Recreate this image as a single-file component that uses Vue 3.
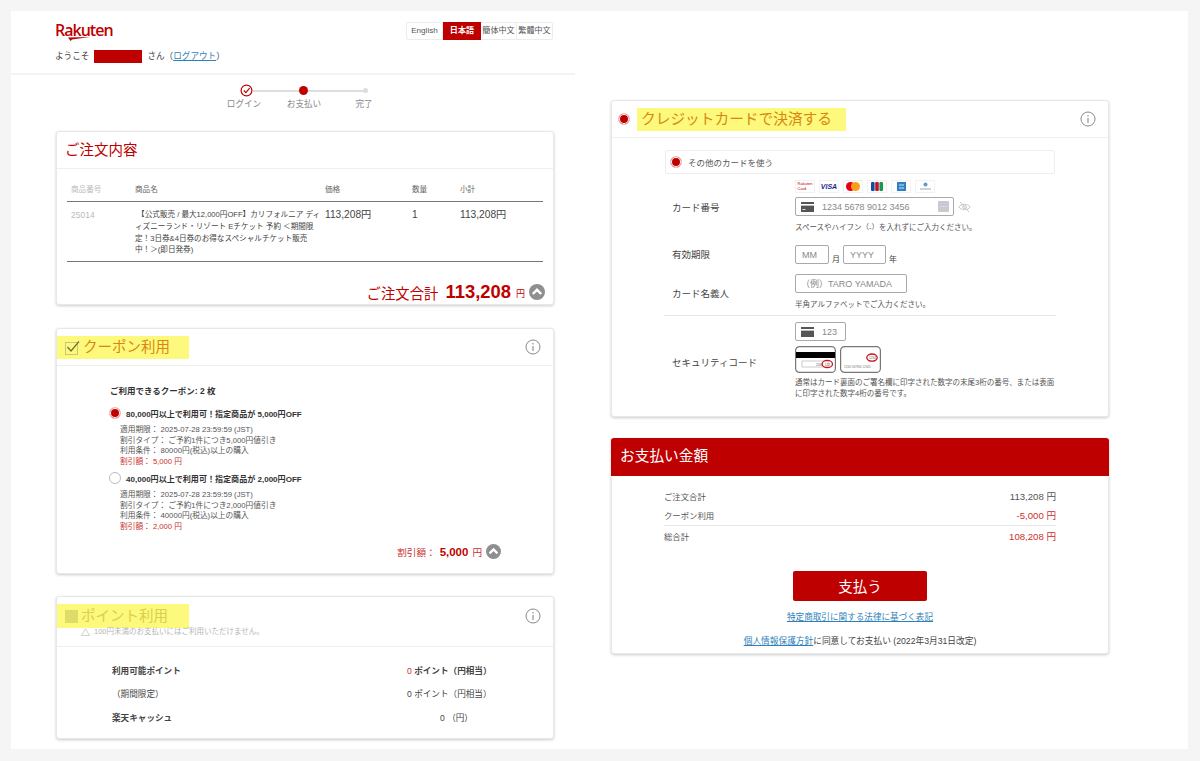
<script setup>
const languages = [
  { label: 'English' },
  { label: '日本語', active: true },
  { label: '簡体中文' },
  { label: '繁體中文' },
]

const columns = ['商品番号', '商品名', '価格', '数量', '小計']

const coupons = [
  {
    title: '80,000円以上で利用可！指定商品が 5,000円OFF',
    selected: true,
    expires: '2025-07-28 23:59:59 (JST)',
    type: 'ご予約1件につき5,000円値引き',
    condition: '80000円(税込)以上の購入',
    discount: '5,000 円',
  },
  {
    title: '40,000円以上で利用可！指定商品が 2,000円OFF',
    selected: false,
    expires: '2025-07-28 23:59:59 (JST)',
    type: 'ご予約1件につき2,000円値引き',
    condition: '40000円(税込)以上の購入',
    discount: '2,000 円',
  },
]
</script>

<template>
  <div class="page">
    <div class="canvas">
      <div class="left">
        <header class="top">
          <div class="top-row">
            <div class="logo">
              <span class="logo-text">Rakuten</span>
              <svg class="logo-swoosh" width="22" height="4" viewBox="0 0 22 4">
                <path d="M0 0.4 L22 0 L4 2.6 L2.5 4 Z" fill="#bf0000" />
              </svg>
            </div>
            <div class="langs">
              <span v-for="l in languages" :key="l.label" class="lang" :class="{ active: l.active }">{{ l.label }}</span>
            </div>
          </div>
          <div class="welcome">
            <span>ようこそ</span>
            <span class="name-mask"></span>
            <span>さん（<a class="link">ログアウト</a>）</span>
          </div>
        </header>

        <div class="steps">
          <div class="step-track">
            <svg width="13" height="13" viewBox="0 0 13 13">
              <circle cx="6.5" cy="6.5" r="5.4" fill="#fff" stroke="#bf0000" stroke-width="1.2" />
              <path d="M3.8 6.5 L5.9 8.6 L9.6 4.2" fill="none" stroke="#bf0000" stroke-width="1.2" />
            </svg>
            <span class="step-line"></span>
            <span class="step-dot"></span>
            <span class="step-line second"></span>
            <span class="step-dot off"></span>
          </div>
          <div class="step-labels">
            <span>ログイン</span>
            <span>お支払い</span>
            <span>完了</span>
          </div>
        </div>

        <section class="card order">
          <div class="card-head">
            <h2 class="title">ご注文内容</h2>
          </div>
          <div class="order-body">
            <div class="table-row table-head">
              <span v-for="c in columns" :key="c">{{ c }}</span>
            </div>
            <div class="table-row table-item">
              <span class="muted">25014</span>
              <span class="product">&nbsp;【公式販売 / 最大12,000円OFF】カリフォルニア ディ<br />ィズニーランド・リゾート Eチケット 予約 ＜期間限<br />定！3日券&amp;4日券のお得なスペシャルチケット販売<br />中！＞(即日発券)</span>
              <span class="num">113,208円</span>
              <span class="num">1</span>
              <span class="num">113,208円</span>
            </div>
            <div class="order-total">
              <span class="total-label">ご注文合計</span>
              <b class="total-value">113,208</b>
              <span class="total-yen">円</span>
              <svg class="chevron" width="16" height="16" viewBox="0 0 16 16">
                <circle cx="8" cy="8" r="8" fill="#8f8f8f" />
                <path d="M3.8 10 L8 5.8 L12.2 10" fill="none" stroke="#fff" stroke-width="2.4" />
              </svg>
            </div>
          </div>
        </section>

        <section class="card coupon">
          <div class="card-head between">
            <div class="marker">
              <svg width="15" height="15" viewBox="0 0 15 15">
                <rect x="0.5" y="2.5" width="12" height="12" fill="none" stroke="#c9c77a" />
                <path d="M2.5 7 L6 11 L14 1.5" fill="none" stroke="#6d6d3a" stroke-width="1.2" />
              </svg>
              <h2 class="title hl">クーポン利用</h2>
            </div>
            <svg class="info" width="16" height="16" viewBox="0 0 16 16">
              <circle cx="8" cy="8" r="7" fill="none" stroke="#888" />
              <path d="M8 7 V12 M8 4 V5.4" stroke="#888" stroke-width="1.1" />
            </svg>
          </div>
          <div class="coupon-body">
            <p class="coupon-count">ご利用できるクーポン: 2 枚</p>
            <div v-for="c in coupons" :key="c.title" class="coupon-item">
              <div class="coupon-title">
                <span class="radio" :class="{ on: c.selected }"></span>
                <b>{{ c.title }}</b>
              </div>
              <div class="coupon-detail">
                <div>適用期限： {{ c.expires }}</div>
                <div>割引タイプ： {{ c.type }}</div>
                <div>利用条件： {{ c.condition }}</div>
                <div class="red-text">割引額： {{ c.discount }}</div>
              </div>
            </div>
            <div class="coupon-total">
              <span>割引額：</span>
              <b>5,000</b>
              <span>円</span>
              <svg width="15" height="15" viewBox="0 0 16 16">
                <circle cx="8" cy="8" r="8" fill="#8f8f8f" />
                <path d="M3.8 10 L8 5.8 L12.2 10" fill="none" stroke="#fff" stroke-width="2.4" />
              </svg>
            </div>
          </div>
        </section>

        <section class="card points">
          <div class="points-head">
            <div class="between">
              <div class="marker">
                <span class="disabled-box"></span>
                <h2 class="title hl pale">ポイント利用</h2>
              </div>
              <svg class="info" width="16" height="16" viewBox="0 0 16 16">
                <circle cx="8" cy="8" r="7" fill="none" stroke="#888" />
                <path d="M8 7 V12 M8 4 V5.4" stroke="#888" stroke-width="1.1" />
              </svg>
            </div>
            <div class="points-note">
              <svg width="9" height="8" viewBox="0 0 9 8">
                <path d="M4.5 0.7 L8.5 7.5 H0.5 Z" fill="none" stroke="#c4c4c4" stroke-width="0.8" />
              </svg>
              <span>100円未満のお支払いにはご利用いただけません。</span>
            </div>
          </div>
          <div class="points-body">
            <div class="point-row">
              <b>利用可能ポイント</b>
              <b class="point-value"><span class="red-text light">0</span> ポイント（円相当）</b>
            </div>
            <div class="point-row">
              <span>（期間限定）</span>
              <span class="point-value">0 ポイント（円相当）</span>
            </div>
            <div class="point-row">
              <b>楽天キャッシュ</b>
              <span class="point-value cash">0 （円）</span>
            </div>
          </div>
        </section>
      </div>

      <div class="right">
        <section class="card credit">
          <div class="card-head between">
            <div class="credit-title">
              <span class="radio on"></span>
              <div class="credit-hl">
                <h2 class="title hl">クレジットカードで決済する</h2>
              </div>
            </div>
            <svg class="info" width="16" height="16" viewBox="0 0 16 16">
              <circle cx="8" cy="8" r="7" fill="none" stroke="#888" />
              <path d="M8 7 V12 M8 4 V5.4" stroke="#888" stroke-width="1.1" />
            </svg>
          </div>
          <div class="credit-body">
            <div class="other-card">
              <span class="radio on"></span>
              <span>その他のカードを使う</span>
            </div>

            <div class="form-row card-row">
              <label>カード番号</label>
              <div>
                <div class="brands">
                  <span class="brand rakuten">Rakuten<br />Card</span>
                  <span class="brand visa">VISA</span>
                  <span class="brand">
                    <svg width="14" height="9" viewBox="0 0 14 9">
                      <circle cx="4.5" cy="4.5" r="4.5" fill="#e50012" />
                      <circle cx="9.5" cy="4.5" r="4.5" fill="#f79e1b" />
                    </svg>
                  </span>
                  <span class="brand">
                    <svg width="12" height="9" viewBox="0 0 12 9">
                      <rect width="3.6" height="9" rx="1" fill="#0b4ea2" />
                      <rect x="4.2" width="3.6" height="9" rx="1" fill="#c8102e" />
                      <rect x="8.4" width="3.6" height="9" rx="1" fill="#1a9b4b" />
                    </svg>
                  </span>
                  <span class="brand">
                    <svg width="9" height="9" viewBox="0 0 9 9">
                      <rect width="9" height="9" fill="#2f7fc4" />
                      <path d="M2 3 H7 M2 6 H7" stroke="#cfe3f5" />
                    </svg>
                  </span>
                  <span class="brand">
                    <svg width="13" height="9" viewBox="0 0 13 9">
                      <circle cx="6.5" cy="2.5" r="2" fill="#5d9bc9" />
                      <path d="M1 7 H12" stroke="#a8b8c4" stroke-width="1.2" />
                    </svg>
                  </span>
                </div>
                <div class="number-line">
                  <div class="input number">
                    <svg width="13" height="10" viewBox="0 0 13 10">
                      <rect width="13" height="10" fill="#555" />
                      <rect y="2" width="13" height="1.6" fill="#fff" />
                      <rect x="1.5" y="7" width="3" height="1" fill="#ddd" />
                    </svg>
                    <span class="ph">1234 5678 9012 3456</span>
                    <span class="dots">···</span>
                  </div>
                  <svg width="13" height="12" viewBox="0 0 13 12">
                    <path d="M0.8 6 C3 2.4 10 2.4 12.2 6 C10 9.6 3 9.6 0.8 6 Z" fill="none" stroke="#c8c8c8" />
                    <circle cx="6.5" cy="6" r="1.8" fill="none" stroke="#c8c8c8" />
                    <path d="M2 1 L11 11" stroke="#c8c8c8" />
                  </svg>
                </div>
                <p class="hint">スペースやハイフン（-）を入れずにご入力ください。</p>
              </div>
            </div>

            <div class="form-row expiry">
              <label>有効期限</label>
              <div class="expiry-fields">
                <div class="input mm"><span class="ph">MM</span></div>
                <span class="unit">月</span>
                <div class="input yy"><span class="ph">YYYY</span></div>
                <span class="unit">年</span>
              </div>
            </div>

            <div class="form-row holder">
              <label>カード名義人</label>
              <div>
                <div class="input name"><span class="ph">（例）TARO YAMADA</span></div>
                <p class="hint">半角アルファベットでご入力ください。</p>
              </div>
            </div>

            <div class="form-row security">
              <label>セキュリティコード</label>
              <div>
                <div class="input cvv">
                  <svg width="13" height="10" viewBox="0 0 13 10">
                    <rect width="13" height="10" fill="#555" />
                    <rect y="2" width="13" height="1.6" fill="#fff" />
                  </svg>
                  <span class="ph">123</span>
                </div>
                <div class="cvv-pics">
                  <svg width="41" height="27" viewBox="0 0 41 27">
                    <rect x="0.6" y="0.6" width="39.8" height="25.8" rx="4" fill="#fff" stroke="#777" stroke-width="1.2" />
                    <rect x="1" y="6" width="39" height="6" fill="#000" />
                    <rect x="7" y="15" width="26" height="6" fill="#fff" stroke="#999" stroke-width="0.5" />
                    <text x="21" y="19.5" font-size="3.2" fill="#666">2345</text>
                    <text x="29.8" y="19.5" font-size="3.2" fill="#666">123</text>
                    <ellipse cx="32.3" cy="18" rx="5.2" ry="3.6" fill="none" stroke="#d0121b" stroke-width="1.3" />
                  </svg>
                  <svg width="41" height="27" viewBox="0 0 41 27">
                    <rect x="0.6" y="0.6" width="39.8" height="25.8" rx="4" fill="#fff" stroke="#777" stroke-width="1.2" />
                    <text x="29" y="13" font-size="3.2" fill="#666">1234</text>
                    <ellipse cx="32" cy="11.6" rx="5.2" ry="3.6" fill="none" stroke="#d0121b" stroke-width="1.3" />
                    <text x="4" y="21.5" font-size="3" fill="#777">1234 567890 12345</text>
                  </svg>
                </div>
                <p class="hint security-hint">通常はカード裏面のご署名欄に印字された数字の末尾3桁の番号、または表面<br />に印字された数字4桁の番号です。</p>
              </div>
            </div>
          </div>
        </section>

        <section class="card payment">
          <div class="pay-head">お支払い金額</div>
          <div class="pay-body">
            <div class="pay-row">
              <span>ご注文合計</span>
              <span>113,208 円</span>
            </div>
            <div class="pay-row">
              <span>クーポン利用</span>
              <span class="red-text">-5,000 円</span>
            </div>
            <div class="pay-row sum">
              <span>総合計</span>
              <span class="red-text">108,208 円</span>
            </div>
            <button class="pay-button" type="button">支払う</button>
            <a class="link law">特定商取引に関する法律に基づく表記</a>
            <p class="agree"><a class="link">個人情報保護方針</a>に同意してお支払い (2022年3月31日改定)</p>
          </div>
        </section>
      </div>
    </div>
  </div>
</template>

<style>
html,
body {
  margin: 0;
  background: #f5f5f5;
}
</style>

<style scoped>
.page {
  width: 1200px;
  height: 761px;
  padding: 11px 12px 12px 11px;
  box-sizing: border-box;
  font-family: "Liberation Sans", "Noto Sans CJK JP", sans-serif;
  color: #333;
  overflow: hidden;
}

.canvas {
  display: flex;
  height: 738px;
  background: #fff;
}

.left {
  width: 564px;
}

.right {
  width: 498px;
  margin-left: 36px;
  padding-top: 89px;
}

h2,
p {
  margin: 0;
}

.top {
  height: 64px;
  padding: 11px 22px 0 44px;
  box-sizing: border-box;
  border-bottom: 2px solid #f3f3f3;
}

.top-row {
  display: flex;
  justify-content: space-between;
  height: 28px;
}

.logo {
  position: relative;
  width: 60px;
  height: 24px;
}

.logo-text {
  display: block;
  color: #bf0000;
  font-family: "Open Sans", sans-serif;
  font-size: 16px;
  font-weight: 600;
  letter-spacing: -1px;
  line-height: 16px;
}

.logo-swoosh {
  position: absolute;
  left: 13px;
  top: 15px;
}

.langs {
  display: flex;
  height: 18px;
  border: 1px solid #ececec;
  border-radius: 2px;
  box-sizing: border-box;
  width: 147px;
}

.lang {
  flex: 1;
  text-align: center;
  font-size: 8.1px;
  line-height: 16px;
  color: #555;
  border-right: 1px solid #ececec;
  white-space: nowrap;
}

.lang:last-child {
  border-right: 0;
}

.lang.active {
  flex: none;
  width: 38px;
  background: #bf0000;
  color: #fff;
  font-weight: 700;
  margin: -1px 0;
  line-height: 18px;
  border-right: 0;
}

.welcome {
  display: flex;
  align-items: center;
  gap: 5px;
  font-size: 8.6px;
  line-height: 13px;
  color: #444;
}

.name-mask {
  width: 48px;
  height: 13px;
  background: #bf0000;
}

.link {
  color: #2f7fb8;
  text-decoration: underline;
}

.steps {
  width: 180px;
  margin-left: 203px;
  padding-top: 9px;
  height: 56px;
  box-sizing: border-box;
}

.step-track {
  display: flex;
  align-items: center;
  padding-left: 26px;
  height: 13px;
}

.step-line {
  width: 46px;
  height: 2px;
  background: #ddd;
}

.step-line.second {
  width: 55px;
}

.step-dot {
  width: 9px;
  height: 9px;
  border-radius: 50%;
  background: #bf0000;
  flex: none;
}

.step-dot.off {
  width: 5px;
  height: 5px;
  background: #ddd;
}

.step-labels {
  display: grid;
  grid-template-columns: repeat(3, 60px);
  margin-top: 1px;
  font-size: 8.6px;
  line-height: 12px;
  color: #888;
  text-align: center;
}

.card {
  background: #fff;
  border: 1px solid #e8e8e8;
  border-radius: 3px;
  box-shadow: 0 1px 3px rgba(0, 0, 0, 0.2);
  box-sizing: border-box;
}

.left .card {
  width: 498px;
  margin-left: 45px;
}

.card-head {
  height: 37px;
  padding: 0 8px;
  display: flex;
  align-items: center;
  border-bottom: 1px solid #efefef;
  box-sizing: border-box;
}

.between {
  display: flex;
  align-items: center;
  justify-content: space-between;
}

.title {
  font-size: 14.5px;
  font-weight: 400;
  line-height: 22px;
  color: #bf0000;
  white-space: nowrap;
}

.title.hl {
  color: #d9860f;
}

.title.pale {
  color: #d8cf4e;
}

.info {
  flex: none;
  margin-right: 4px;
}

.order {
  height: 174px;
}

.order-body {
  padding: 0 10px;
}

.table-row {
  display: grid;
  grid-template-columns: 64px 190px 87px 48px 1fr;
  padding-left: 4px;
}

.table-head {
  height: 33px;
  align-items: end;
  padding-bottom: 5px;
  box-sizing: border-box;
  font-size: 7.6px;
  line-height: 12px;
  color: #666;
  border-bottom: 1px solid #777;
}

.table-head span:first-child,
.muted {
  color: #bbb;
}

.table-item {
  height: 60px;
  padding-top: 7px;
  box-sizing: border-box;
  border-bottom: 1px solid #777;
}

.muted {
  font-size: 8.5px;
  line-height: 12px;
}

.product {
  font-size: 7.6px;
  line-height: 11.8px;
  color: #444;
  white-space: nowrap;
}

.num {
  font-size: 10.2px;
  line-height: 12px;
  color: #444;
}

.order-total {
  display: flex;
  align-items: center;
  justify-content: flex-end;
  margin-right: -2px;
  margin-top: 20px;
  height: 20px;
  color: #bf0000;
}

.total-label {
  font-size: 14.4px;
}

.total-value {
  font-size: 18.4px;
  margin-left: 7px;
}

.total-yen {
  font-size: 9px;
  margin: 2px 4px 0 5px;
}

.coupon {
  height: 246px;
  margin-top: 23px;
}

.marker {
  display: flex;
  align-items: center;
  gap: 3px;
  background: #fdf97c;
  width: 132px;
  height: 23px;
  margin-left: -8px;
  padding-left: 8px;
  box-sizing: border-box;
}

.coupon-body {
  padding: 19px 0 0 53px;
}

.coupon-count {
  font-size: 8.5px;
  font-weight: 700;
  line-height: 12px;
  color: #333;
  margin-bottom: 9px;
}

.coupon-item {
  margin-bottom: 4px;
}

.coupon-title {
  display: flex;
  align-items: center;
  gap: 5px;
  height: 14px;
  font-size: 8.05px;
  color: #333;
}

.radio {
  display: block;
  flex: none;
  width: 12px;
  height: 12px;
  border-radius: 50%;
  border: 1px solid #bbb;
  background: #fff;
  box-sizing: border-box;
  margin-left: -1px;
}

.radio.on {
  background: #bf0000;
  border-color: #f3c6c6;
  box-shadow: inset 0 0 0 1px #fff;
}

.coupon-detail {
  margin: 5px 0 0 10px;
  font-size: 7.7px;
  line-height: 10.5px;
  color: #555;
}

.red-text {
  color: #c9302c;
}

.coupon-total {
  display: flex;
  align-items: center;
  justify-content: flex-end;
  gap: 4px;
  margin: 12px 52px 0 0;
  font-size: 9.6px;
  color: #c9302c;
}

.coupon-total b {
  font-size: 11.5px;
  color: #bf0000;
}

.points {
  height: 143px;
  margin-top: 22px;
}

.points-head {
  height: 50px;
  padding-top: 7px;
  padding-right: 8px;
  box-sizing: border-box;
  border-bottom: 1px solid #efefef;
}

.points-head .marker {
  width: 132px;
  margin-left: 0;
  height: 24px;
}

.disabled-box {
  width: 13px;
  height: 13px;
  background: #dfdd69;
  flex: none;
}

.points-note {
  display: flex;
  align-items: center;
  gap: 4px;
  padding-left: 24px;
  margin-top: -1px;
  font-size: 7.5px;
  line-height: 10px;
  color: #b5b5b5;
}

.points-body {
  padding: 11px 66px 0 55px;
}

.point-row {
  display: flex;
  justify-content: space-between;
  height: 23.6px;
  align-items: center;
  font-size: 8.6px;
  color: #444;
}

.point-value {
  width: 80px;
  white-space: nowrap;
  font-size: 8.6px;
}

.point-value.cash {
  padding-left: 33px;
  box-sizing: border-box;
}

.light {
  font-weight: 400;
}

.credit {
  height: 317px;
}

.credit-title {
  display: flex;
  align-items: center;
  gap: 7px;
  margin-left: -1px;
}

.credit-hl {
  background: #fdf97c;
  width: 209px;
  height: 23px;
  padding-left: 4px;
  box-sizing: border-box;
}

.credit-hl .title {
  line-height: 23px;
  font-size: 14.7px;
}

.credit-body {
  padding: 12px 53px 0;
}

.other-card {
  display: flex;
  align-items: center;
  gap: 6px;
  height: 24px;
  padding-left: 5px;
  border: 1px solid #eee;
  border-radius: 2px;
  font-size: 8.5px;
  color: #555;
  box-sizing: border-box;
}

.form-row {
  display: flex;
  font-size: 9.5px;
  color: #444;
}

.form-row label {
  width: 130px;
  padding-left: 7px;
  box-sizing: border-box;
  flex: none;
}

.card-row {
  padding-top: 6px;
}

.card-row label {
  padding-top: 20px;
}

.brands {
  display: flex;
  gap: 4px;
  height: 13px;
}

.brand {
  display: flex;
  align-items: center;
  justify-content: center;
  width: 20px;
  height: 13px;
  border: 1px solid #f2f2f2;
  box-sizing: border-box;
}

.brand.rakuten {
  color: #bf0000;
  font-size: 4px;
  line-height: 4.4px;
  white-space: nowrap;
}

.brand.visa {
  color: #1a2a8a;
  font-size: 7px;
  font-weight: 700;
  font-style: italic;
}

.number-line {
  display: flex;
  align-items: center;
  gap: 4px;
  margin-top: 4px;
}

.input {
  display: flex;
  align-items: center;
  height: 19px;
  border: 1px solid #aaa;
  border-radius: 2px;
  box-sizing: border-box;
  font-size: 9px;
}

.ph {
  color: #888;
  white-space: nowrap;
}

.number {
  width: 159px;
  padding-left: 5px;
  gap: 8px;
}

.dots {
  width: 11px;
  height: 11px;
  margin-left: auto;
  margin-right: 4px;
  background: #c9c9d2;
  border-radius: 1px;
  color: #fff;
  font-size: 8px;
  line-height: 11px;
  text-align: center;
}

.hint {
  font-size: 7.5px;
  line-height: 11px;
  color: #555;
  margin-top: 6px;
  white-space: nowrap;
}

.expiry {
  margin-top: 12px;
  height: 19px;
}

.expiry label {
  line-height: 20px;
}

.expiry-fields {
  display: flex;
  align-items: flex-end;
}

.mm {
  width: 34px;
  padding-left: 6px;
}

.yy {
  width: 43px;
  padding-left: 6px;
}

.unit {
  width: 14px;
  text-align: center;
  font-size: 8px;
  line-height: 9px;
}

.holder {
  margin-top: 10px;
  height: 41px;
  border-bottom: 1px solid #e6e6e6;
  box-sizing: content-box;
  margin-left: -1px;
  margin-right: -1px;
}

.holder label {
  padding-top: 12px;
  padding-left: 8px;
  width: 131px;
}

.name {
  width: 112px;
  padding-left: 5px;
}

.security {
  margin-top: 6px;
}

.security label {
  padding-top: 33px;
}

.cvv {
  width: 51px;
  padding-left: 5px;
  gap: 8px;
}

.cvv-pics {
  display: flex;
  gap: 4px;
  margin-top: 5px;
}

.security-hint {
  margin-top: 4px;
}

.payment {
  height: 216px;
  margin-top: 21px;
}

.pay-head {
  height: 38px;
  margin: -1px -1px 0;
  padding-left: 9px;
  background: #bf0000;
  border-radius: 3px 3px 0 0;
  color: #fff;
  font-size: 14.7px;
  line-height: 37px;
}

.pay-body {
  display: flex;
  flex-direction: column;
  align-items: center;
  padding: 10px 52px 0;
}

.pay-row {
  display: flex;
  justify-content: space-between;
  align-self: stretch;
  height: 19.5px;
  align-items: center;
  font-size: 8.4px;
  color: #555;
}

.pay-row span:last-child {
  font-size: 9.6px;
}

.pay-row.sum {
  border-top: 1px solid #e6e6e6;
}

.pay-button {
  width: 134px;
  height: 30px;
  margin-top: 25px;
  background: #bf0000;
  border: 0;
  border-radius: 2px;
  color: #fff;
  font-family: inherit;
  font-size: 14.5px;
}

.law {
  margin-top: 10px;
  font-size: 8.6px;
  line-height: 12px;
}

.agree {
  margin-top: 12px;
  font-size: 8.7px;
  line-height: 12px;
  color: #444;
}
</style>
